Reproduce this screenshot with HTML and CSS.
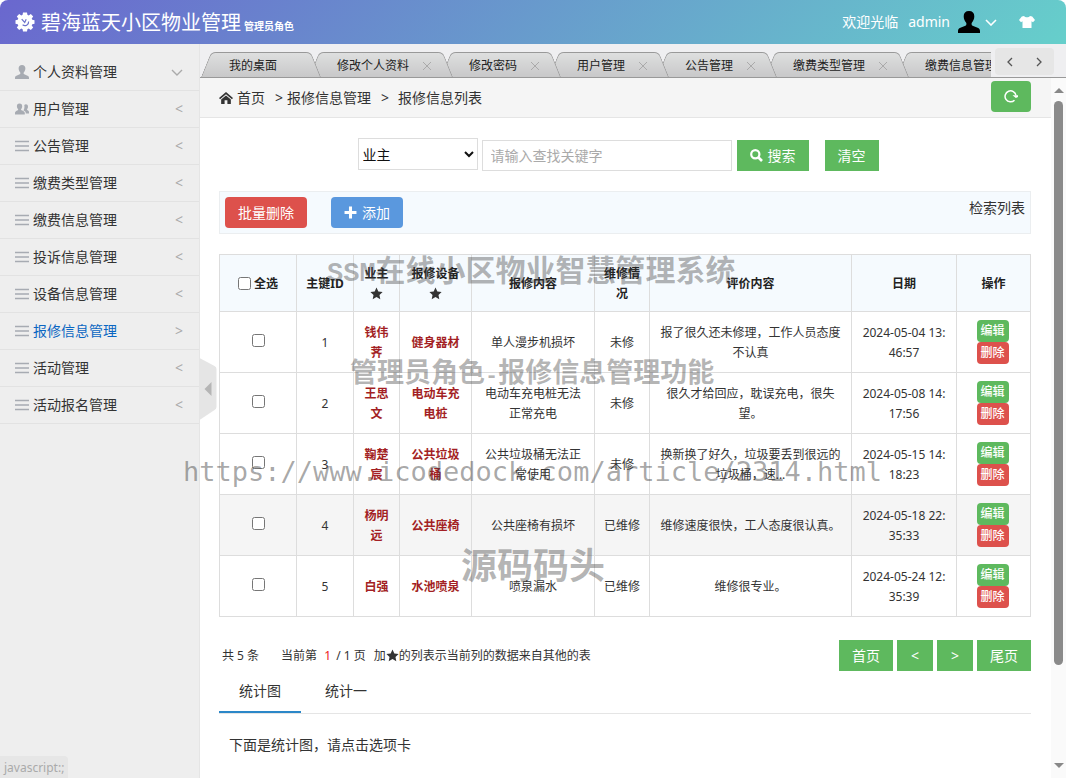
FILE: index.html
```html
<!DOCTYPE html>
<html lang="zh-CN">
<head>
<meta charset="utf-8">
<title>碧海蓝天小区物业管理</title>
<link rel="stylesheet" href="styles.css">
</head>
<body>
<svg class="sprite" aria-hidden="true">
  <symbol id="person" viewBox="0 0 22 22"><path d="M11 0c3.500 0 5.300 2 5.300 5.200 0 2.800-1 4.600-2.300 6.200-.7 1-.6 2.800.6 3.300l5 2.100c1.600.7 2.400 1.700 2.400 3.200v2H0v-2c0-1.500.8-2.500 2.400-3.200l5-2.100c1.200-.5 1.300-2.300.6-3.300C6.700 9.800 5.700 8 5.700 5.200 5.700 2 7.500 0 11 0z"/></symbol>
  <symbol id="people" viewBox="0 0 14 11"><path d="M9.300 1.500C10.600 0 13 .8 13 3c0 1.500-.5 2-1 3 0 1 2 1 2 2.500V10h-3.200c0-1.800-.8-2.400-2.300-3 .9-1.700 1.200-3.400.8-5.500z"/><path d="M4.500 0c2 0 2.700 1.200 2.700 2.800 0 1.500-.6 2.300-1.200 3.200 0 1.200 3.800 1.200 3.800 3.500V11H0V9.500C0 7.200 3.200 7.200 3.200 6c-.6-.9-1.300-1.700-1.300-3.200C1.900 1.200 2.600 0 4.500 0z"/></symbol>
  <symbol id="lines" viewBox="0 0 14 14"><path d="M0 2.500h14M0 7h14M0 11.500h14" fill="none" stroke="currentColor" stroke-width="1.600"/></symbol>
  <symbol id="star" viewBox="0 0 24 24"><path d="M12 1l3.400 7.200 7.900 1-5.800 5.400 1.500 7.900-7-3.900-7 3.900 1.500-7.900L.7 9.200l7.900-1z"/></symbol>
</svg>

<header class="topbar">
  <svg class="logo" viewBox="0 0 20 20" aria-hidden="true"><path d="M8 .5h4l.4 2.300 1.300.6L15.800 2l2.400 2.500-1.500 2 .6 1.300 2.200.4v3.600l-2.200.4-.6 1.300 1.500 2-2.400 2.500-2.100-1.400-1.300.6-.4 2.300H8l-.4-2.300-1.300-.6L4.200 18l-2.400-2.500 1.500-2-.6-1.300-2.200-.4V8.200l2.200-.4.6-1.300-1.500-2L4.200 2l2.100 1.400 1.300-.6z" fill="#fff"/><path d="M6.700 7.200l3 3.200 1.500-3.200M13.600 9.500a3.700 3.700 0 0 1-6 3.300" fill="none" stroke="#6c72cb" stroke-width="1.200"/></svg>
  <h1 class="brand">碧海蓝天小区物业管理</h1>
  <span class="role">管理员角色</span>
  <div class="account">
    <span>欢迎光临</span>
    <a class="user" href="#">admin
      <svg class="avatar" aria-hidden="true"><use href="#person"/></svg>
      <svg class="caret" viewBox="0 0 12 7" aria-hidden="true"><path d="M1 1l5 5 5-5" fill="none" stroke="#fff" stroke-width="1.600"/></svg>
    </a>
    <button class="skin" aria-label="换肤"><svg viewBox="0 0 16 12" aria-hidden="true"><path d="M5 0c1 1.700 5 1.700 6 0l2.200.6L16 4l-2 2.200-1.500-1V12h-9V5.200L2 6.200 0 4 2.800.6z" fill="#fff"/></svg></button>
  </div>
</header>

<div class="shell">
  <nav class="side">
    <a href="#"><svg class="ico"><use href="#person"/></svg>个人资料管理<svg class="fold" viewBox="0 0 12 7"><path d="M1 1l5 5 5-5" fill="none" stroke="#aaa" stroke-width="1.400"/></svg></a>
    <a href="#"><svg class="ico"><use href="#people"/></svg>用户管理<i>&lt;</i></a>
    <a href="#"><svg class="ico"><use href="#lines"/></svg>公告管理<i>&lt;</i></a>
    <a href="#"><svg class="ico"><use href="#lines"/></svg>缴费类型管理<i>&lt;</i></a>
    <a href="#"><svg class="ico"><use href="#lines"/></svg>缴费信息管理<i>&lt;</i></a>
    <a href="#"><svg class="ico"><use href="#lines"/></svg>投诉信息管理<i>&lt;</i></a>
    <a href="#"><svg class="ico"><use href="#lines"/></svg>设备信息管理<i>&lt;</i></a>
    <a href="#" class="current"><svg class="ico"><use href="#lines"/></svg>报修信息管理<i>&gt;</i></a>
    <a href="#"><svg class="ico"><use href="#lines"/></svg>活动管理<i>&lt;</i></a>
    <a href="#"><svg class="ico"><use href="#lines"/></svg>活动报名管理<i>&lt;</i></a>
    <button class="collapse" aria-label="收起菜单"><svg viewBox="0 0 17 62" aria-hidden="true"><path d="M0 0l15 8q2 1 2 3v38q0 2-2 3L0 62z" fill="#e5e5e5"/><path d="M12 24v14l-7-7z" fill="#b5b5b5"/></svg></button>
    <span class="status">javascript:;</span>
  </nav>

  <div class="work">
    <div class="tabbar">
      <ul class="tabs">
        <li>我的桌面</li>
        <li>修改个人资料<button aria-label="关闭"></button></li>
        <li>修改密码<button aria-label="关闭"></button></li>
        <li>用户管理<button aria-label="关闭"></button></li>
        <li>公告管理<button aria-label="关闭"></button></li>
        <li>缴费类型管理<button aria-label="关闭"></button></li>
        <li>缴费信息管理<button aria-label="关闭"></button></li>
      </ul>
      <div class="tabmove">
        <button aria-label="向左"><svg viewBox="0 0 6 10"><path d="M5 1L1 5l4 4"/></svg></button>
        <button aria-label="向右"><svg viewBox="0 0 6 10"><path d="M1 1l4 4-4 4"/></svg></button>
      </div>
    </div>

    <div class="frame">
      <main class="page">
        <div class="crumbs">
          <svg class="home" viewBox="0 0 13 11" aria-hidden="true"><path d="M0 5.600L6.500 0 13 5.600l-1 1.100-5.500-4.600L1 6.700z"/><path d="M6.500 3.200l4.500 3.700V11H7.800V7.500H5.200V11H2V6.900z"/></svg>
          <a href="#">首页</a><b>&gt;</b><a href="#" class="mid">报修信息管理</a><b>&gt;</b><span class="last">报修信息列表</span>
          <button class="refresh" aria-label="刷新"><svg viewBox="0 0 14 14"><path d="M10.500 11.200A5.500 5.500 0 1 1 12 6.500" fill="none" stroke="#fff" stroke-width="1.500"/><path d="M8.500 6.200H14V8l-2.200 1z" fill="#fff"/></svg></button>
        </div>

        <div class="content">
          <form class="search" onsubmit="return false">
            <select aria-label="查找字段"><option>业主</option><option>报修设备</option></select>
            <input type="text" aria-label="关键字" placeholder="请输入查找关键字">
            <button class="btn go"><svg viewBox="0 0 13 13" aria-hidden="true"><circle cx="5.300" cy="5.300" r="4.100" fill="none" stroke="#fff" stroke-width="2.200"/><path d="M8.500 8.500l3.500 3.500" stroke="#fff" stroke-width="2.600"/></svg>搜索</button>
            <button class="btn clear" type="reset">清空</button>
          </form>

          <div class="tools">
            <button class="btn round red">批量删除</button>
            <button class="btn round blue"><svg viewBox="0 0 12 12" aria-hidden="true"><path d="M6 .5v11M.5 6h11" stroke="#fff" stroke-width="2.800"/></svg>添加</button>
            <span>检索列表</span>
          </div>

          <table class="list">
            <colgroup><col class="c1"><col class="c2"><col class="c3"><col class="c4"><col class="c5"><col class="c6"><col class="c7"><col class="c8"><col class="c9"></colgroup>
            <thead><tr>
              <th><label><input type="checkbox"> 全选</label></th><th>主键ID</th>
              <th>业主<svg class="star"><use href="#star"/></svg></th>
              <th>报修设备<svg class="star"><use href="#star"/></svg></th>
              <th>报修内容</th><th>维修情况</th><th>评价内容</th><th>日期</th><th>操作</th>
            </tr></thead>
            <tbody>
              <tr><td><input type="checkbox" aria-label="选择 1"></td><td>1</td><td class="ref">钱伟荠</td><td class="ref">健身器材</td><td>单人漫步机损坏</td><td>未修</td><td>报了很久还未修理，工作人员态度不认真</td><td>2024-05-04 13:<wbr>46:57</td><td><button class="mini">编辑</button><button class="mini del">删除</button></td></tr>
              <tr><td><input type="checkbox" aria-label="选择 2"></td><td>2</td><td class="ref">王思文</td><td class="ref">电动车充电桩</td><td>电动车充电桩无法正常充电</td><td>未修</td><td>很久才给回应，耽误充电，很失望。</td><td>2024-05-08 14:<wbr>17:56</td><td><button class="mini">编辑</button><button class="mini del">删除</button></td></tr>
              <tr><td><input type="checkbox" aria-label="选择 3"></td><td>3</td><td class="ref">鞠楚宸</td><td class="ref">公共垃圾桶</td><td>公共垃圾桶无法正常使用</td><td>未修</td><td>换新换了好久，垃圾要丢到很远的垃圾桶，速...</td><td>2024-05-15 14:<wbr>18:23</td><td><button class="mini">编辑</button><button class="mini del">删除</button></td></tr>
              <tr class="hover"><td><input type="checkbox" aria-label="选择 4"></td><td>4</td><td class="ref">杨明远</td><td class="ref">公共座椅</td><td>公共座椅有损坏</td><td>已维修</td><td>维修速度很快，工人态度很认真。</td><td>2024-05-18 22:<wbr>35:33</td><td><button class="mini">编辑</button><button class="mini del">删除</button></td></tr>
              <tr><td><input type="checkbox" aria-label="选择 5"></td><td>5</td><td class="ref">白强</td><td class="ref">水池喷泉</td><td>喷泉漏水</td><td>已维修</td><td>维修很专业。</td><td>2024-05-24 12:<wbr>35:39</td><td><button class="mini">编辑</button><button class="mini del">删除</button></td></tr>
            </tbody>
          </table>

          <div class="pager">
            <span class="total">共 5 条</span><span>当前第 <em>1</em> / 1 页</span><span class="note">加<svg class="star"><use href="#star"/></svg>的列表示当前列的数据来自其他的表</span>
            <div class="pages"><button class="btn">首页</button><button class="btn">&lt;</button><button class="btn">&gt;</button><button class="btn">尾页</button></div>
          </div>

          <div class="charts"><button class="on">统计图</button><button>统计一</button></div>
          <p class="hint">下面是统计图，请点击选项卡</p>
        </div>
      </main>
      <div class="scroll" aria-hidden="true"><i class="up"></i><i class="thumb"></i><i class="down"></i></div>
    </div>
  </div>
</div>

<div class="marks">
  <span class="m1"><span class="half">SSM</span>在线小区物业智慧管理系统</span>
  <span class="m2">管理员角色<span class="dash">-</span>报修信息管理功能</span>
  <span class="m3">https://www.icodedock.com/article/2314.html</span>
  <span class="m4">源码码头</span>
</div>
</body>
</html>
```

FILE: styles.css
```css
* { box-sizing: border-box; }
body {
  margin: 0;
  min-height: 100vh;
  display: flex;
  flex-direction: column;
  overflow: hidden;
  color: #333;
  background: #fff;
  font: 14px/20px "Noto Sans", "Noto Sans CJK SC", sans-serif;
}
a { color: inherit; text-decoration: none; }
button, input, select { font: inherit; color: inherit; }
button { border: 0; padding: 0; background: none; cursor: pointer; }
i, em { font-style: normal; }
.sprite { display: none; }

.topbar {
  height: 44px;
  display: flex;
  align-items: center;
  padding: 0 31px 0 15px;
  color: #fff;
  border-radius: 8px 8px 0 0;
  background: linear-gradient(135deg, #6a67ce, #66cfcb);
}
.logo { width: 20px; height: 20px; }
.brand { margin: 2px 0 0 6px; font-size: 20px; line-height: 42px; font-weight: 400; }
.role { margin: 8px 0 0 3px; font-size: 10px; font-weight: 700; }
.account { margin-left: auto; display: flex; align-items: center; gap: 10px; }
.user { display: flex; align-items: center; }
.avatar { width: 22px; height: 22px; margin-left: 8px; fill: #000; }
.caret { width: 12px; height: 7px; margin-left: 5px; }
.skin { margin-left: 12px; display: flex; }
.skin svg { width: 16px; height: 12px; }

.shell { flex: 1; display: flex; }
.side {
  position: relative;
  flex: 0 0 200px;
  padding-top: 10px;
  background: #eee;
  border-right: 1px solid #e5e5e5;
}
.side a {
  display: flex;
  align-items: center;
  height: 37px;
  padding: 0 16px 0 15px;
  border-bottom: 1px solid #e2e2e2;
}
.side .ico { width: 14px; height: 14px; margin-right: 4px; fill: #a7abb2; color: #a7abb2; }
.side i { margin-left: auto; color: #aaa; }
.side .fold { width: 12px; height: 7px; margin-left: auto; }
.side .current { color: #0a66c2; }
.collapse { position: absolute; left: 199px; top: 314px; z-index: 2; }
.collapse svg { display: block; width: 18px; height: 62px; }
.status {
  position: absolute;
  left: 0;
  bottom: 0;
  padding: 2px 4px 0;
  font-size: 12px;
  color: #aaa;
  background: #e6e6e6;
  border-radius: 0 4px 0 0;
}

.work { flex: 1; min-width: 0; display: flex; flex-direction: column; }
.tabbar { display: flex; height: 34px; background: #efeff1; border-bottom: 1px solid #999; }
.tabs {
  flex: 1;
  min-width: 0;
  display: flex;
  align-items: flex-end;
  overflow: hidden;
  margin: 0;
  padding: 0 0 0 1px;
  list-style: none;
}
.tabs li {
  position: relative;
  isolation: isolate;
  flex: none;
  display: flex;
  align-items: center;
  height: 25px;
  min-width: 120px;
  margin-right: -12px;
  padding: 2px 22px 0 28px;
  font-size: 12px;
  color: #222;
}
.tabs li::before, .tabs li::after {
  content: "";
  position: absolute;
  z-index: -1;
  top: 0;
  bottom: 0;
  border-top: 1px solid #999;
  background: linear-gradient(#dedfdf, #c8c8c9);
}
.tabs li::before { left: 5px; right: 40%; border-left: 1px solid #999; border-radius: 5px 0 0 0; transform: skewX(-22deg); }
.tabs li::after { left: 40%; right: 5px; border-right: 1px solid #999; border-radius: 0 5px 0 0; transform: skewX(22deg); }
.tabs li:nth-child(1) { z-index: 7; }
.tabs li:nth-child(2) { z-index: 6; }
.tabs li:nth-child(3) { z-index: 5; }
.tabs li:nth-child(4) { z-index: 4; }
.tabs li:nth-child(5) { z-index: 3; }
.tabs li:nth-child(6) { z-index: 2; }
.tabs button {
  width: 8px;
  height: 8px;
  margin-left: 14px;
  background:
    linear-gradient(45deg, transparent 45%, #aaa 45% 55%, transparent 55%),
    linear-gradient(-45deg, transparent 45%, #aaa 45% 55%, transparent 55%);
}
.tabmove { display: flex; margin: 4px 12px 2px 4px; padding-right: 1px; background: #e6e6e6; border-radius: 4px; }
.tabmove button { width: 29px; display: flex; align-items: center; justify-content: center; }
.tabmove svg { width: 6px; height: 10px; fill: none; stroke: #555; stroke-width: 1.3; }

.frame { flex: 1; display: flex; }
.page { flex: 1; min-width: 0; }
.crumbs {
  display: flex;
  align-items: center;
  height: 40px;
  padding: 0 20px 0 19px;
  background: #f5f5f5;
  border-bottom: 1px solid #e5e5e5;
}
.home { width: 14px; height: 12px; margin-right: 4px; fill: #333; }
.crumbs b { margin-left: 10px; font-weight: 400; }
.mid { margin-left: 4px; }
.last { margin-left: 9px; }
.refresh {
  width: 40px;
  height: 31px;
  margin: 0 0 3px auto;
  display: flex;
  align-items: center;
  justify-content: center;
  border-radius: 4px;
  background: #5eb95e;
}
.refresh svg { width: 14px; height: 14px; }

.content { padding: 20px 20px 22px 19px; }
.search { display: flex; justify-content: center; align-items: flex-end; margin-bottom: 20px; padding-right: 14px; }
.search select {
  width: 120px;
  height: 32px;
  margin: 0 4px 1px 0;
  padding: 0;
  border: 1px solid #ddd;
  background: #fff;
  color: #111;
}
.search input { width: 250px; height: 31px; padding: 0 8px; border: 1px solid #ddd; }
.search input::placeholder { color: #aaa; }
.btn {
  height: 31px;
  padding: 0 13px;
  display: flex;
  align-items: center;
  justify-content: center;
  color: #fff;
  background: #5eb95e;
}
.btn svg { width: 13px; height: 13px; margin-right: 5px; }
.go { margin-left: 5px; }
.clear { margin-left: 16px; }
.round { border-radius: 4px; }
.red { background: #dd514c; }
.blue { background: #5a98de; margin-left: 24px; }
.tools {
  display: flex;
  align-items: flex-start;
  padding: 5px;
  height: 43px;
  background: #f5fafe;
  border: 1px solid #ebeef0;
}
.tools span { margin: 1px 0 0 auto; }

.list {
  width: 100%;
  margin-top: 20px;
  table-layout: fixed;
  border-collapse: collapse;
  font-size: 12px;
  text-align: center;
}
.list th, .list td { border: 1px solid #ddd; padding: 9px 8px 7px; height: 61px; word-break: break-word; }
.list th { height: 57px; padding: 9px 4px 7px; background: #f5fafe; color: #222; }
.list th input { margin: 0; vertical-align: -2px; }
.list td input { margin: 0 0 6px; vertical-align: middle; }
.list th label { white-space: nowrap; }
.list .ref { color: #a31f24; font-weight: 700; }
.list .hover { background: #f5f5f5; }
.c1 { width: 77px; }
.c2 { width: 57px; }
.c3 { width: 46px; }
.c4 { width: 72px; }
.c5 { width: 123px; }
.c6 { width: 55px; }
.c7 { width: 202px; }
.c8 { width: 105px; }
.c9 { width: 74px; }
.star { width: 13px; height: 13px; fill: #333; vertical-align: -2px; }
th .star { display: block; margin: 3px auto 4px; }
.mini {
  display: block;
  width: 32px;
  height: 22px;
  margin: 0 auto;
  border-radius: 4px;
  font-weight: 500;
  color: #fff;
  background: #5eb95e;
}
.del { background: #dd514c; }
.list td:last-child { padding: 7px 9px 7px 7px; }

.pager { display: flex; align-items: center; margin-top: 23px; padding-left: 3px; font-size: 12px; }
.total { margin-right: 22px; }
.pager em { margin: 0 2px 0 4px; color: #e22; }
.note { margin-left: 8px; }
.pages { display: flex; gap: 4px; margin-left: auto; font-size: 14px; }
.pages .btn { min-width: 36px; }
.charts { display: flex; border-bottom: 1px solid #e5e5e5; }
.charts button { height: 42px; padding: 0 20px; border-bottom: 2px solid transparent; }
.charts button + button { margin-left: 4px; }
.charts .on { border-color: #2b87c8; }
.hint { margin: 21px 10px 0; }

.scroll {
  flex: 0 0 15px;
  display: flex;
  flex-direction: column;
  align-items: center;
  padding: 10px 0;
  background: #fafafa;
}
.up, .down { border: 5px solid transparent; }
.up { border-top: 0; border-bottom-color: #888; }
.down { border-bottom: 0; border-top-color: #888; margin-top: auto; }
.thumb { width: 9px; height: 83%; margin-top: 8px; border-radius: 5px; background: #8a8a8a; }

.marks {
  position: absolute;
  inset: 0;
  overflow: hidden;
  pointer-events: none;
  z-index: 10;
  font-family: "Liberation Mono", "Noto Sans CJK SC", monospace;
  font-weight: 700;
  color: rgba(60, 60, 60, .38);
}
.marks > span { position: absolute; line-height: 40px; white-space: nowrap; }
.m1 { left: 327px; top: 253px; font-size: 30px; }
.half { font-size: 27px; }
.m2 { left: 350px; top: 355px; font-size: 27px; }
.dash { font-size: 22px; }
.marks .m3 { left: 183px; top: 452px; font-size: 27px; font-weight: 400; font-family: "DejaVu Sans Mono", monospace; color: rgba(60, 60, 60, .45); }
.m4 { left: 461px; top: 550px; font-size: 36px; }
```
